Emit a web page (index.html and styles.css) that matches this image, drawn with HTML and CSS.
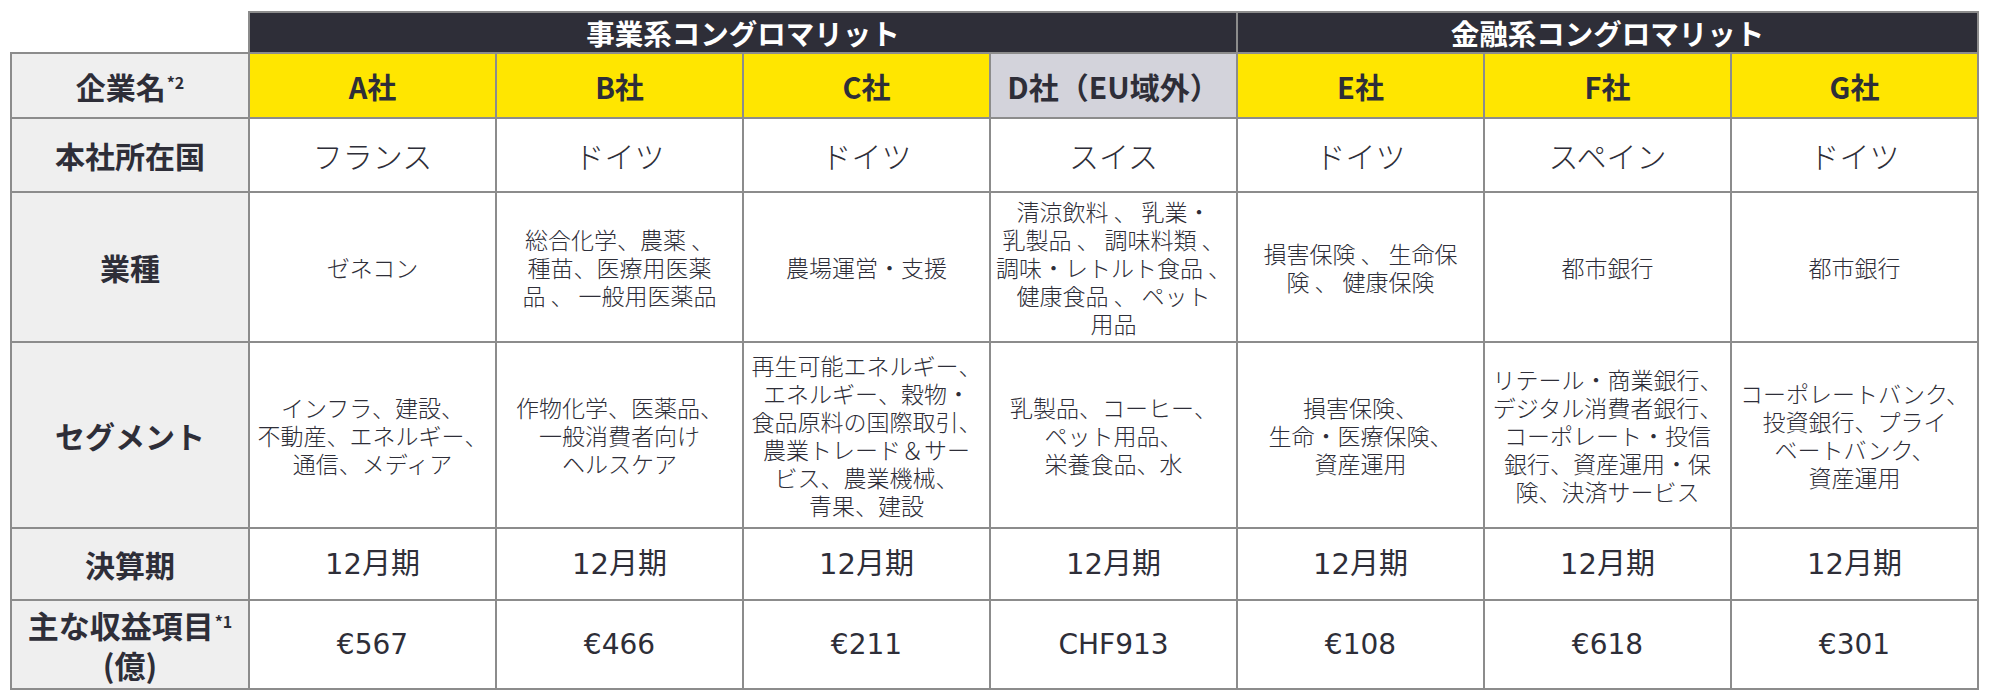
FILE: index.html
```html
<!DOCTYPE html>
<html lang="ja">
<head>
<meta charset="utf-8">
<title>コングロマリット比較</title>
<link rel="stylesheet" href="styles.css">
</head>
<body>
<div class="page">
<table class="cmp">
  <colgroup>
    <col class="col-label">
    <col><col><col><col><col><col><col>
  </colgroup>
  <thead>
    <tr class="r-group">
      <th class="corner"></th>
      <th class="group" colspan="4">事業系コングロマリット</th>
      <th class="group" colspan="3">金融系コングロマリット</th>
    </tr>
    <tr class="r-name">
      <th class="label">企業名<sup>*2</sup></th>
      <th class="co">A社</th>
      <th class="co">B社</th>
      <th class="co">C社</th>
      <th class="co co-ext">D社（EU域外）</th>
      <th class="co">E社</th>
      <th class="co">F社</th>
      <th class="co">G社</th>
    </tr>
  </thead>
  <tbody>
    <tr class="r-country">
      <th class="label">本社所在国</th>
      <td class="big">フランス</td>
      <td class="big">ドイツ</td>
      <td class="big">ドイツ</td>
      <td class="big">スイス</td>
      <td class="big">ドイツ</td>
      <td class="big">スペイン</td>
      <td class="big">ドイツ</td>
    </tr>
    <tr class="r-industry">
      <th class="label">業種</th>
      <td class="small">ゼネコン</td>
      <td class="small">総合化学、農薬 、<br>種苗、医療用医薬<br>品 、 一般用医薬品</td>
      <td class="small">農場運営・支援</td>
      <td class="small">清涼飲料 、 乳業・<br>乳製品 、 調味料類 、<br>調味・レトルト食品 、<br>健康食品 、 ペット<br>用品</td>
      <td class="small">損害保険 、 生命保<br>険 、 健康保険</td>
      <td class="small">都市銀行</td>
      <td class="small">都市銀行</td>
    </tr>
    <tr class="r-segment">
      <th class="label">セグメント</th>
      <td class="small">インフラ、建設、<br>不動産、エネルギー、<br>通信、メディア</td>
      <td class="small">作物化学、医薬品、<br>一般消費者向け<br>ヘルスケア</td>
      <td class="small">再生可能エネルギー、<br>エネルギー、穀物・<br>食品原料の国際取引、<br>農業トレード＆サー<br>ビス、農業機械、<br>青果、建設</td>
      <td class="small">乳製品、コーヒー、<br>ペット用品、<br>栄養食品、水</td>
      <td class="small">損害保険、<br>生命・医療保険、<br>資産運用</td>
      <td class="small">リテール・商業銀行、<br>デジタル消費者銀行、<br>コーポレート・投信<br>銀行、資産運用・保<br>険、決済サービス</td>
      <td class="small">コーポレートバンク、<br>投資銀行、プライ<br>ベートバンク、<br>資産運用</td>
    </tr>
    <tr class="r-fiscal">
      <th class="label">決算期</th>
      <td class="num num-fy">12月期</td>
      <td class="num num-fy">12月期</td>
      <td class="num num-fy">12月期</td>
      <td class="num num-fy">12月期</td>
      <td class="num num-fy">12月期</td>
      <td class="num num-fy">12月期</td>
      <td class="num num-fy">12月期</td>
    </tr>
    <tr class="r-revenue">
      <th class="label label-2l">主な収益項目<sup>*1</sup><br>(億)</th>
      <td class="num">€567</td>
      <td class="num">€466</td>
      <td class="num">€211</td>
      <td class="num">CHF913</td>
      <td class="num">€108</td>
      <td class="num">€618</td>
      <td class="num">€301</td>
    </tr>
  </tbody>
</table>
</div>
</body>
</html>
```

FILE: styles.css
```css
html, body {
  margin: 0;
  padding: 0;
  background: #ffffff;
}

.page {
  padding: 11px 0 0 10px;
  font-family: "Noto Sans CJK JP", "Noto Sans", sans-serif;
  color: #2e2e38;
}

.cmp {
  border-collapse: collapse;
  table-layout: fixed;
  width: 1969px;
}

.col-label {
  width: 238px;
}

.cmp th,
.cmp td {
  border: 2px solid #8c8c8c;
  padding: 0;
  text-align: center;
  vertical-align: middle;
}

.cmp th.corner {
  border-top: none;
  border-left: none;
  background: #ffffff;
}

.r-group { height: 41px; }
.r-name { height: 65px; }
.r-country { height: 74px; }
.r-industry { height: 150px; }
.r-segment { height: 186px; }
.r-fiscal { height: 72px; }
.r-revenue { height: 89px; }

.group {
  background: #2e2e38;
  color: #ffffff;
  font-size: 28.5px;
  font-weight: 700;
  line-height: 36px;
  border-right-color: #c9c9cc;
}

.co {
  background: #ffe600;
  font-size: 29px;
  font-weight: 700;
  line-height: 36px;
}

.co-ext {
  background: #d3d3db;
  font-size: 30px;
}

.label {
  background: #efefef;
  font-size: 30px;
  font-weight: 700;
  line-height: 40px;
}

.label-2l {
  font-size: 31px;
  line-height: 40px;
}

.label sup {
  font-size: 16px;
  vertical-align: top;
  position: relative;
  top: -4px;
  margin-left: 1px;
}

.big {
  font-size: 30px;
  font-weight: 300;
  line-height: 40px;
}

.small {
  font-size: 23px;
  font-weight: 300;
  line-height: 28px;
}

.num {
  font-family: "DejaVu Sans", "Noto Sans CJK JP", sans-serif;
  font-size: 28px;
  font-weight: 400;
  line-height: 40px;
}

.num-fy {
  font-size: 29px;
}
```
